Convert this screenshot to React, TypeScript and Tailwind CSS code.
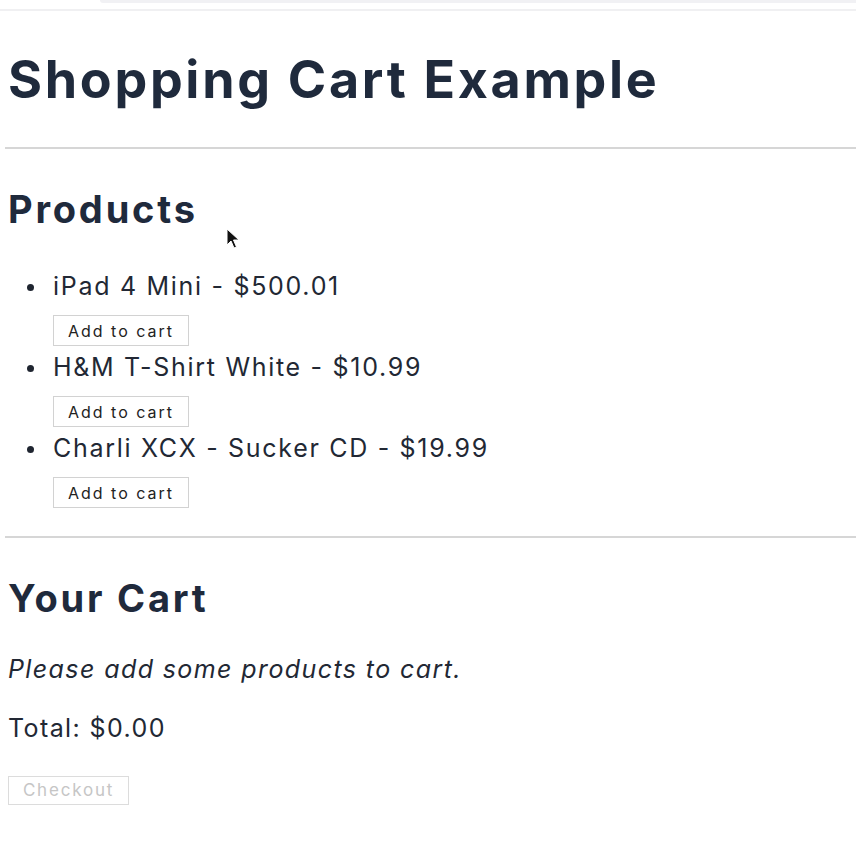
const products = [
  { title: "iPad 4 Mini", price: "500.01" },
  { title: "H&M T-Shirt White", price: "10.99" },
  { title: "Charli XCX - Sucker CD", price: "19.99" },
];

const App = () => {
  return (
    <div className="relative min-h-screen bg-white font-['Inter',sans-serif] text-[#222834]">
      {/* browser chrome leftovers */}
      <div className="ml-[100px] h-[3px] rounded-bl bg-[#f1f1f4]"></div>
      <div className="mt-[6px] h-[2px] bg-[#f0f0f2]"></div>

      <div className="px-2">
        <h1 className="mt-[38px] text-[52px] font-bold leading-[62px] tracking-[2.7px] text-[#1f2a3c]">
          Shopping Cart Example
        </h1>
        <hr className="mt-[36px] -ml-[3px] -mr-2 border-t-2 border-[#d6d6d6]" />

        <h2 className="mt-[37px] text-[38px] font-bold leading-[46px] tracking-[2.8px] text-[#1f2a3c]">
          Products
        </h2>
        <ul className="mt-[39px]">
          {products.map((p) => (
            <li key={p.title} className="flex">
              <span className="mt-[13px] ml-[19px] mr-[19px] h-[7px] w-[7px] shrink-0 rounded-full bg-[#1f2530]"></span>
              <div className="mb-[6px]">
                <div className="text-[25px] leading-[30px] tracking-[1.7px]">
                  {p.title} - ${p.price}
                </div>
                <button className="mt-[14px] h-[31px] w-[136px] border border-[#d2d2d2] bg-white text-[16px] tracking-[2px] text-[#222]">
                  Add to cart
                </button>
              </div>
            </li>
          ))}
        </ul>
        <hr className="mt-[22px] -ml-[3px] -mr-2 border-t-2 border-[#d6d6d6]" />

        <h2 className="mt-[37px] text-[38px] font-bold leading-[46px] tracking-[2.8px] text-[#1f2a3c]">
          Your Cart
        </h2>
        <p className="mt-[33px] text-[25px] italic leading-[30px] tracking-[1.4px]">
          Please add some products to cart.
        </p>
        <p className="mt-[29px] text-[25px] leading-[30px] tracking-[1.4px]">
          Total: $0.00
        </p>
        <button
          disabled
          className="mt-[33px] h-[29px] w-[121px] border border-[#dcdcdc] bg-white text-[17px] tracking-[1.8px] text-[#c6c6c6]"
        >
          Checkout
        </button>
      </div>

      {/* mouse pointer */}
      <svg
        className="absolute left-[226px] top-[228px]"
        width="14"
        height="22"
        viewBox="0 0 14 22"
      >
        <path
          d="M1 1 L1 17 L5 13 L8 20 L10.5 19 L7.5 12 L13 12 Z"
          fill="#111"
          stroke="#fff"
          strokeWidth="1"
        />
      </svg>
    </div>
  );
};

export default App;
